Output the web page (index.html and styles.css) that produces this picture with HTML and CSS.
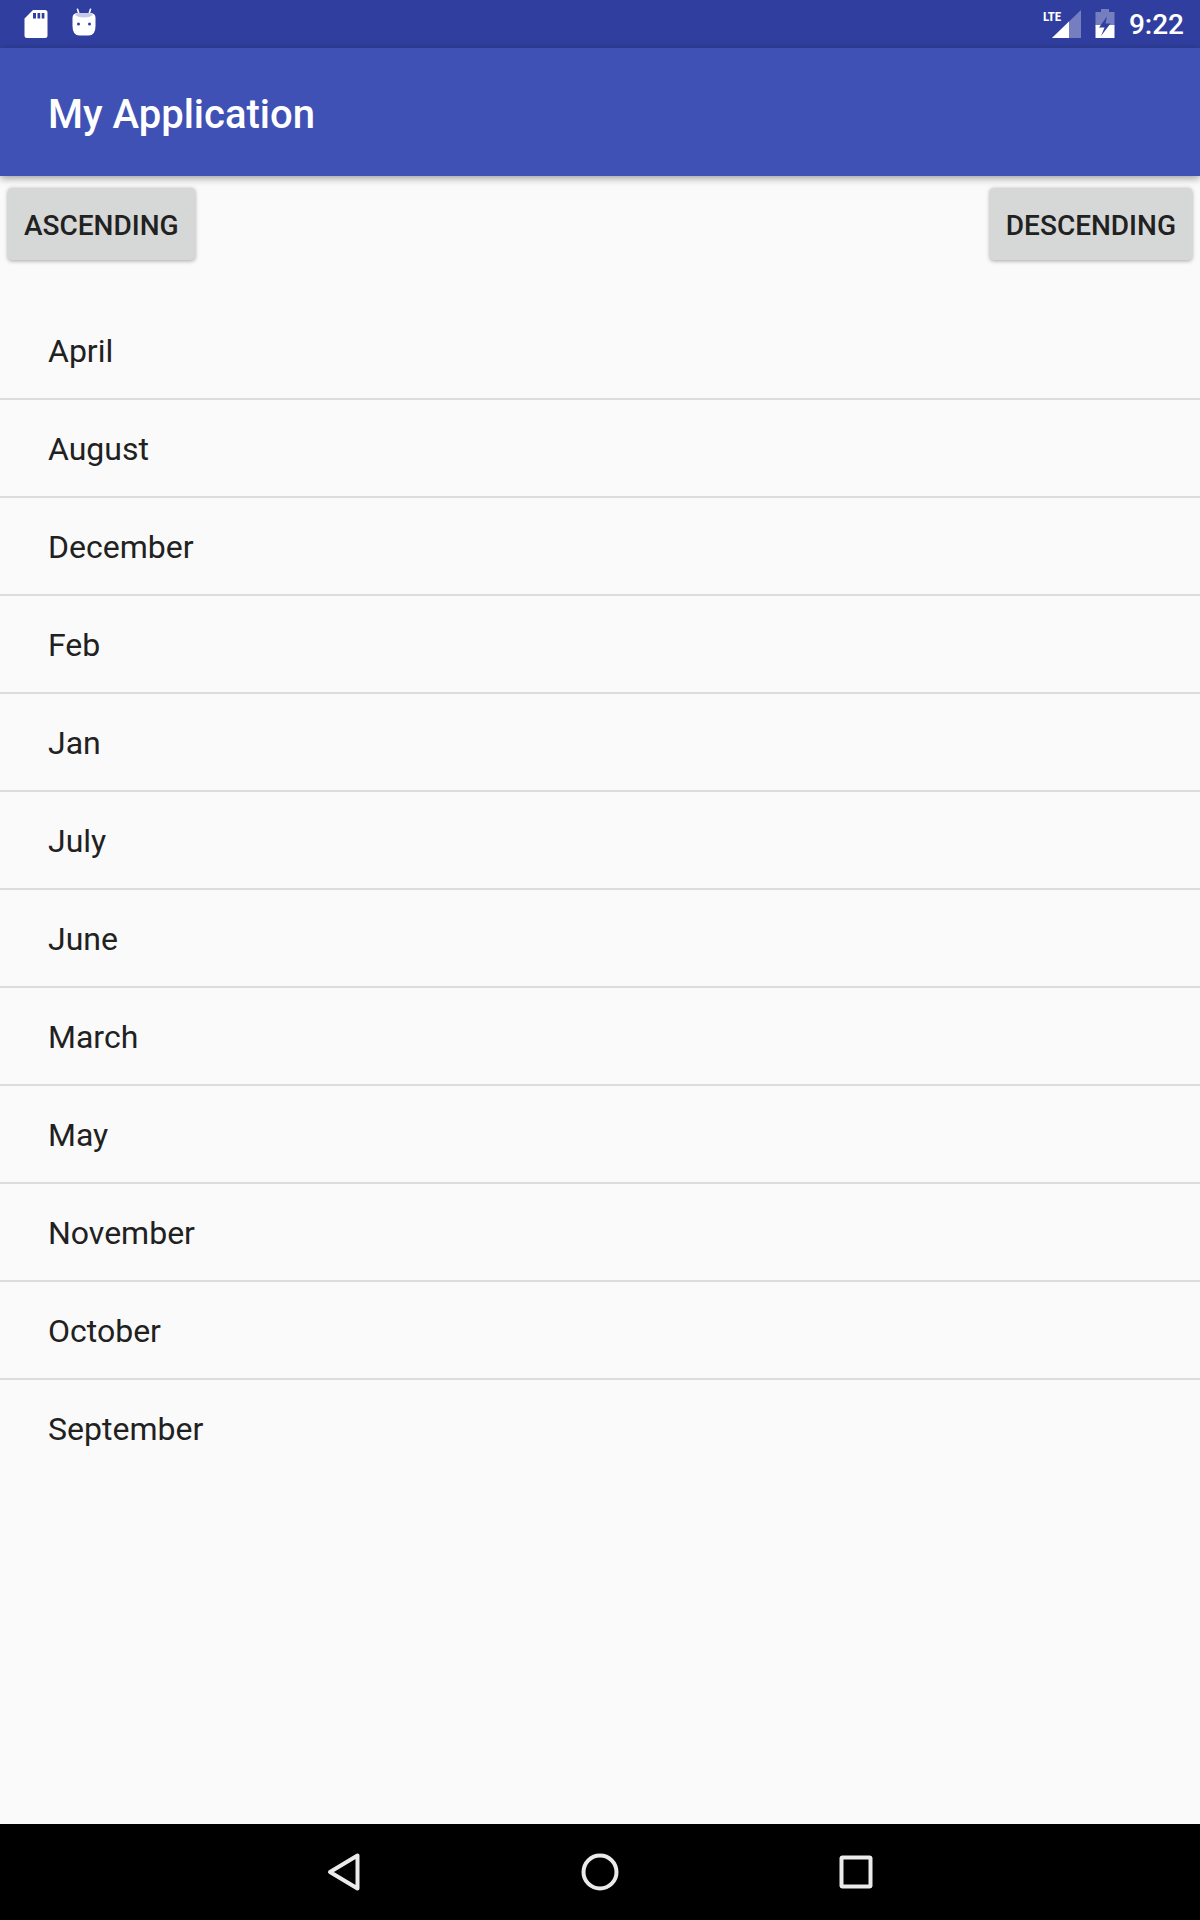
FILE: index.html
```html
<!DOCTYPE html>
<html lang="en">
<head>
  <meta charset="utf-8">
  <meta name="viewport" content="width=device-width, initial-scale=1">
  <title>My Application</title>
  <link rel="stylesheet" href="styles.css">
</head>
<body>
  <div class="status-bar">
    <div class="status-group">
      <svg class="status-icon" viewBox="0 0 24 28" aria-hidden="true">
        <path fill="#fff" fill-rule="evenodd" d="M9 0H21a2.500 2.500 0 0 1 2.500 2.500V25.500a2.500 2.500 0 0 1-2.500 2.500H3a2.500 2.500 0 0 1-2.500-2.500V8.500zM9 3V8.500h3V3zM13.500 3V8.500h2.700V3zM17.700 3V8.500h2.700V3z"/>
      </svg>
      <svg class="status-icon status-icon-debug" viewBox="0 0 24 28" aria-hidden="true">
        <path fill="none" stroke="#fff" stroke-width="1.600" stroke-linecap="round" d="M5.500 1.200L7 6M18.500 1.200L17 6"/>
        <path fill="#fff" d="M.5 10Q.5 5 6 5H18Q23.500 5 23.500 10V18Q23.500 27.500 16.500 27.500H7.500Q.5 27.500 .5 18z"/>
        <path fill="#c5cae9" d="M3 6.500Q5 5 7 5H17Q19 5 21 6.500Q19 9.500 12 9.500T3 6.500z"/>
        <circle cx="6.500" cy="16" r="1.500" fill="#303f9f"/>
        <circle cx="17.500" cy="16" r="1.500" fill="#303f9f"/>
      </svg>
    </div>
    <div class="status-group status-group-end">
      <div class="signal">
        <svg class="signal-icon" viewBox="0 0 30 28" aria-hidden="true">
          <path fill="#757fbf" d="M30 0V28H1z"/>
          <path fill="#fff" d="M18 11.500V28H1z"/>
        </svg>
        <span class="signal-label">LTE</span>
      </div>
      <svg class="battery-icon" viewBox="0 0 20 30" aria-hidden="true">
        <path fill="#757fbf" d="M6 0H14V3H19.500V16.500H.5V3H6z"/>
        <path fill="#fff" d="M.5 16H19.500V29H.5z"/>
        <path fill="#303f9f" d="M12 7.500L4 18.500H9.500L6 27L15.500 14.500H10.500z"/>
      </svg>
      <time class="clock">9:22</time>
    </div>
  </div>

  <header class="app-bar">
    <h1 class="app-title">My Application</h1>
  </header>

  <main class="content">
    <div class="actions">
      <button class="action-button" type="button">ASCENDING</button>
      <button class="action-button" type="button">DESCENDING</button>
    </div>
    <ul class="month-list">
      <li class="month">April</li>
      <li class="month">August</li>
      <li class="month">December</li>
      <li class="month">Feb</li>
      <li class="month">Jan</li>
      <li class="month">July</li>
      <li class="month">June</li>
      <li class="month">March</li>
      <li class="month">May</li>
      <li class="month">November</li>
      <li class="month">October</li>
      <li class="month">September</li>
    </ul>
  </main>

  <nav class="nav-bar" aria-label="System">
    <button class="nav-button" type="button" aria-label="Back">
      <svg class="nav-icon" viewBox="0 0 40 40" aria-hidden="true"><path d="M33.500 3.500V36.500L6 20z"/></svg>
    </button>
    <button class="nav-button" type="button" aria-label="Home">
      <svg class="nav-icon" viewBox="0 0 40 40" aria-hidden="true"><circle cx="20" cy="20" r="16.500"/></svg>
    </button>
    <button class="nav-button" type="button" aria-label="Recent apps">
      <svg class="nav-icon" viewBox="0 0 40 40" aria-hidden="true"><rect x="5.500" y="5.500" width="29" height="29" rx="1"/></svg>
    </button>
  </nav>
</body>
</html>
```

FILE: styles.css
```css
* {
  box-sizing: border-box;
}

body {
  margin: 0;
  min-height: 100vh;
  display: flex;
  flex-direction: column;
  background: #fafafa;
  color: #212121;
  font-family: Roboto, "Liberation Sans", sans-serif;
}

.status-bar {
  display: flex;
  justify-content: space-between;
  align-items: center;
  height: 48px;
  padding: 0 16px 0 24px;
  background: #303f9f;
  color: #fff;
}

.status-group {
  display: flex;
  align-items: center;
  gap: 24px;
}

.status-group-end {
  gap: 14px;
}

.status-icon {
  width: 24px;
  height: 28px;
}

.status-icon-debug {
  margin-bottom: 4px;
}

.signal {
  position: relative;
  display: flex;
}

.signal-icon {
  width: 30px;
  height: 28px;
}

.signal-label {
  position: absolute;
  top: -1px;
  left: -8px;
  font-family: "Roboto Condensed", "Open Sans Condensed", "Liberation Sans Narrow", Roboto, sans-serif;
  font-size: 13px;
  font-weight: 700;
  line-height: 16px;
}

.battery-icon {
  width: 20px;
  height: 30px;
}

.clock {
  padding-top: 2px;
  font-size: 28px;
  font-weight: 500;
  line-height: 32px;
}

.app-bar {
  display: flex;
  align-items: center;
  min-height: 128px;
  padding: 6px 48px 0;
  background: #3f51b5;
  color: #fff;
  box-shadow: 0 2px 8px rgba(0, 0, 0, 0.4);
}

.app-title {
  margin: 0;
  font-size: 40px;
  font-weight: 500;
  line-height: 48px;
}

.content {
  flex: 1;
}

.actions {
  display: flex;
  justify-content: space-between;
  padding: 12px 8px 42px;
}

.action-button {
  height: 72px;
  padding: 4px 16px 0;
  border: 0;
  border-radius: 4px;
  background: #d6d7d7;
  color: #212121;
  font: inherit;
  font-size: 28px;
  font-weight: 500;
  line-height: 32px;
  box-shadow: 0 1px 4px rgba(0, 0, 0, 0.35);
}

.month-list {
  margin: 0;
  padding: 0;
  list-style: none;
}

.month {
  padding: 30px 48px 28px;
  font-size: 32px;
  line-height: 38px;
}

.month + .month {
  border-top: 2px solid #dcdcdc;
}

.nav-bar {
  display: flex;
  justify-content: center;
  gap: 96px;
  height: 96px;
  background: #000;
}

.nav-button {
  display: flex;
  align-items: center;
  justify-content: center;
  width: 160px;
  padding: 0;
  border: 0;
  background: none;
}

.nav-icon {
  width: 40px;
  height: 40px;
  fill: none;
  stroke: #ebebeb;
  stroke-width: 4px;
  stroke-linejoin: round;
}
```
